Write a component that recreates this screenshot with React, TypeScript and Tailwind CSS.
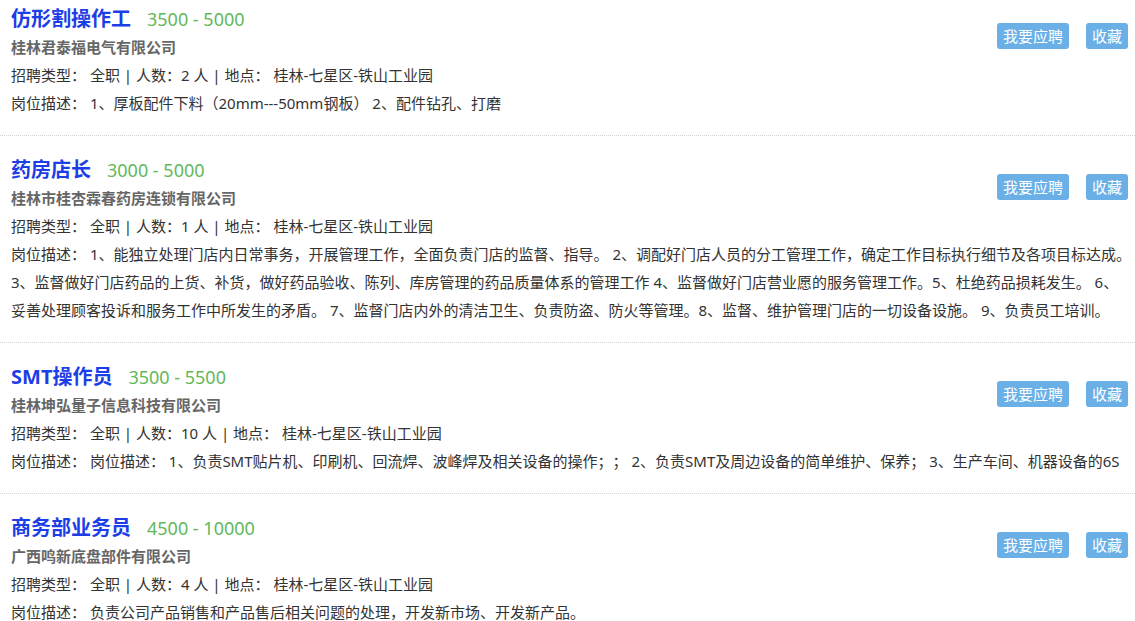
import React from "react";

interface Job {
  title: string;
  salary: string;
  company: string;
  count: number;
  place: string;
  desc: string;
}

const JOBS: Job[] = [
  {
    title: "仿形割操作工",
    salary: "3500 - 5000",
    company: "桂林君泰福电气有限公司",
    count: 2,
    place: "桂林-七星区-铁山工业园",
    desc: "1、厚板配件下料（20mm---50mm钢板） 2、配件钻孔、打磨",
  },
  {
    title: "药房店长",
    salary: "3000 - 5000",
    company: "桂林市桂杏霖春药房连锁有限公司",
    count: 1,
    place: "桂林-七星区-铁山工业园",
    desc: "1、能独立处理门店内日常事务，开展管理工作，全面负责门店的监督、指导。 2、调配好门店人员的分工管理工作，确定工作目标执行细节及各项目标达成。 3、监督做好门店药品的上货、补货，做好药品验收、陈列、库房管理的药品质量体系的管理工作 4、监督做好门店营业愿的服务管理工作。5、杜绝药品损耗发生。 6、妥善处理顾客投诉和服务工作中所发生的矛盾。 7、监督门店内外的清洁卫生、负责防盗、防火等管理。8、监督、维护管理门店的一切设备设施。 9、负责员工培训。",
  },
  {
    title: "SMT操作员",
    salary: "3500 - 5500",
    company: "桂林坤弘量子信息科技有限公司",
    count: 10,
    place: "桂林-七星区-铁山工业园",
    desc: "岗位描述： 1、负责SMT贴片机、印刷机、回流焊、波峰焊及相关设备的操作；； 2、负责SMT及周边设备的简单维护、保养； 3、生产车间、机器设备的6S",
  },
  {
    title: "商务部业务员",
    salary: "4500 - 10000",
    company: "广西鸣新底盘部件有限公司",
    count: 4,
    place: "桂林-七星区-铁山工业园",
    desc: "负责公司产品销售和产品售后相关问题的处理，开发新市场、开发新产品。",
  },
];

function JobItem({ job }: { job: Job }) {
  return (
    <div className="border-b border-dotted border-[#d4d4d4] pt-[20px] pb-[18px] pl-[11px] pr-[5px]">
      <div className="float-right mt-[18px] flex gap-[17px] pr-[2px]">
        <button className="h-[26px] rounded-[3px] bg-[#6aafe6] px-[6px] text-[15px] leading-[26px] text-white">
          我要应聘
        </button>
        <button className="h-[26px] rounded-[3px] bg-[#6aafe6] px-[6px] text-[15px] leading-[26px] text-white">
          收藏
        </button>
      </div>
      <div className="flex items-baseline h-[28px] leading-[28px]">
        <span className="text-[20px] font-bold text-[#1c3ee6]">{job.title}</span>
        <span className="ml-[16px] text-[18px] text-[#62b85a]">{job.salary}</span>
      </div>
      <div className="h-[28px] leading-[28px] text-[15px] font-bold text-[#666]">{job.company}</div>
      <div className="leading-[28px] text-[15px] text-[#333]">
        招聘类型： 全职 | 人数：{job.count} 人 | 地点： {job.place}
      </div>
      <div className="-mr-[2px] leading-[28px] text-[15px] text-[#333]">岗位描述： {job.desc}</div>
    </div>
  );
}

export default function App() {
  return (
    <div
      className="h-[621px] w-[1135px] overflow-hidden bg-white [text-spacing-trim:space-all]"
      style={{ fontFamily: '"Noto Sans", "Noto Sans CJK SC", sans-serif' }}
    >
      <div className="-mt-[15px]">
        {JOBS.map((job) => (
          <JobItem key={job.title} job={job} />
        ))}
      </div>
    </div>
  );
}
